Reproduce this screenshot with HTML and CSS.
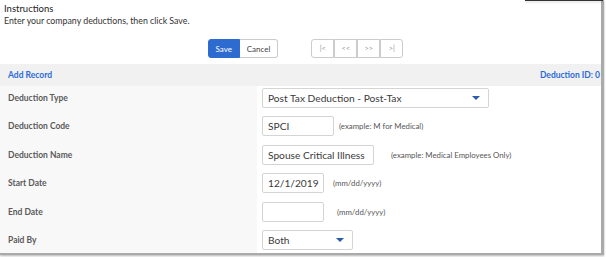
FILE: index.html
```html
<!DOCTYPE html>
<html lang="en">
<head>
  <meta charset="UTF-8">
  <title>Company Deductions</title>
  <link rel="stylesheet" href="styles.css">
</head>
<body>
  <div class="topline"></div>
  <main class="page">
    <div class="intro">
      <div class="intro-title">Instructions</div>
      <div class="intro-text">Enter your company deductions, then click Save.</div>
    </div>

    <div class="toolbar">
      <div class="btn-group">
        <button class="btn btn-save">Save</button>
        <button class="btn">Cancel</button>
      </div>
      <div class="btn-group nav">
        <button class="btn btn-nav">|&lt;</button>
        <button class="btn btn-nav">&lt;&lt;</button>
        <button class="btn btn-nav">&gt;&gt;</button>
        <button class="btn btn-nav">&gt;|</button>
      </div>
    </div>

    <div class="band">
      <a class="link">Add Record</a>
      <span class="link">Deduction ID: 0</span>
    </div>

    <div class="form">
      <div class="row">
        <div class="label">Deduction Type</div>
        <div class="field">
          <div class="select wide">Post Tax Deduction - Post-Tax<span class="caret"></span></div>
        </div>
      </div>
      <div class="row">
        <div class="label">Deduction Code</div>
        <div class="field">
          <div class="input code">SPCI</div>
          <span class="hint hint-code">(example: M for Medical)</span>
        </div>
      </div>
      <div class="row">
        <div class="label">Deduction Name</div>
        <div class="field">
          <div class="input name">Spouse Critical Illness</div>
          <span class="hint hint-name">(example: Medical Employees Only)</span>
        </div>
      </div>
      <div class="row">
        <div class="label">Start Date</div>
        <div class="field">
          <div class="input date">12/1/2019</div>
          <span class="hint hint-date">(mm/dd/yyyy)</span>
        </div>
      </div>
      <div class="row">
        <div class="label">End Date</div>
        <div class="field">
          <div class="input date"></div>
          <span class="hint hint-end">(mm/dd/yyyy)</span>
        </div>
      </div>
      <div class="row">
        <div class="label">Paid By</div>
        <div class="field">
          <div class="select small">Both<span class="caret"></span></div>
        </div>
      </div>
    </div>
  </main>
</body>
</html>
```

FILE: styles.css
```css
* {
  margin: 0;
  padding: 0;
  box-sizing: border-box;
}
body {
  width: 606px;
  height: 257px;
  background-color: #fff;
  font-family: Lato, "Liberation Sans", sans-serif;
  color: #333;
  overflow: hidden;
  position: relative;
}
/* shadow of the window above */
.topline {
  position: absolute;
  top: 0;
  left: 525px;
  width: 78px;
  height: 1px;
  background-color: #333;
  box-shadow: 0 1px 3px rgba(0, 0, 0, 0.25);
}
.page {
  width: 604px;
  height: 255px;
  border-right: 3px solid #aaa;
  border-bottom: 2px solid #aaa;
  box-shadow: 0 1px 2px rgba(0, 0, 0, 0.3);
  overflow: hidden;
}
.intro {
  padding: 3px 0 0 4px;
  height: 39px;
}
.intro-title {
  font-size: 9.5px;
  line-height: 12px;
  color: #222;
}
.intro-text {
  font-size: 8.8px;
  line-height: 12px;
  color: #333;
}
.toolbar {
  display: flex;
  justify-content: center;
  gap: 33px;
  height: 25px;
  padding-left: 10px;
}
.btn-group {
  display: flex;
  height: 19px;
}
.btn {
  font-family: Lato, "Liberation Sans", sans-serif;
  font-size: 8px;
  background-color: #fff;
  color: #444;
  border: 1px solid #ccc;
  padding: 0 7px;
  height: 19px;
}
.btn-group .btn:first-child {
  border-radius: 3px 0 0 3px;
}
.btn-group .btn:last-child {
  border-radius: 0 3px 3px 0;
}
.btn-group .btn + .btn {
  border-left: none;
}
.btn-save {
  background-color: #2d6bd0;
  border-color: #2d6bd0;
  color: #fff;
  width: 32px;
  padding: 0;
}
.nav .btn-nav {
  width: 23px;
  padding: 0;
  font-size: 7.5px;
  color: #999;
}
.nav .btn-nav + .btn-nav {
  border-left: 1px solid #ccc;
}
.band {
  display: flex;
  justify-content: space-between;
  align-items: center;
  height: 22px;
  background-color: #f1f1f1;
  padding: 0 1px 0 8px;
}
.link {
  color: #2a6ad8;
  font-size: 8.5px;
  font-weight: bold;
}
.row {
  display: flex;
  height: 28.4px;
}
.label {
  width: 257px;
  background-color: #f8f8f8;
  padding: 2px 0 0 8px;
  line-height: 20px;
  font-size: 8.5px;
  font-weight: bold;
  color: #5a5a5a;
}
.field {
  display: flex;
  align-items: flex-start;
  padding: 2px 0 0 5px;
}
.input,
.select {
  height: 20px;
  border: 1px solid #d4d4d4;
  border-radius: 2px;
  font-size: 10.2px;
  color: #3a3a3a;
  padding: 0 5px;
  display: flex;
  align-items: center;
}
.code {
  width: 72px;
}
.name {
  width: 112px;
}
.date {
  width: 62px;
}
.select {
  justify-content: space-between;
  padding-right: 8px;
}
.wide {
  width: 227px;
}
.small {
  width: 91px;
}
.caret {
  width: 0;
  height: 0;
  border-left: 4px solid transparent;
  border-right: 4px solid transparent;
  border-top: 4px solid #2a5cae;
}
.hint {
  font-size: 7.8px;
  line-height: 20px;
  color: #555;
}
.hint-code {
  margin-left: 5px;
}
.hint-name {
  margin-left: 17px;
}
.hint-date {
  margin-left: 9px;
}
.hint-end {
  margin-left: 13px;
}
```
